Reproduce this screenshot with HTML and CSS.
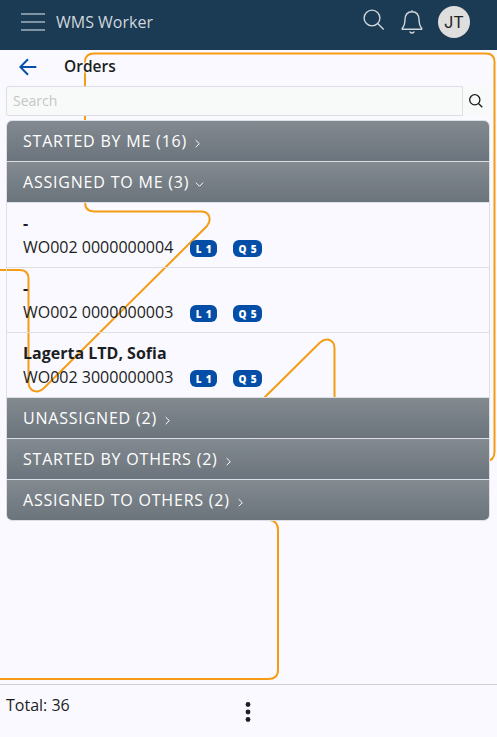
FILE: index.html
```html
<!DOCTYPE html>
<html lang="en">
<head>
<meta charset="utf-8">
<title>WMS Worker</title>
<link rel="stylesheet" href="styles.css">
</head>
<body>
<header class="navbar">
  <svg class="menu" width="24" height="20" viewBox="0 0 24 20"><path d="M0 2h24M0 10h24M0 18h24"/></svg>
  <span class="brand">WMS Worker</span>
  <svg class="nav-search" width="22" height="22" viewBox="0 0 22 22"><circle cx="9" cy="9" r="7.9"/><path d="M14.7 14.6l6 6"/></svg>
  <svg class="bell" width="22" height="25" viewBox="0 0 22 25"><path d="M11 .3v1.500M1.200 18.200c2.200-2.200 2.600-4.300 2.700-8C4 4.900 6.800 1.800 11 1.800s7 3.100 7.100 8.400c.1 3.700.5 5.800 2.700 8 .2.400 0 1.100-.5 1.100H1.700c-.5 0-.7-.7-.5-1.100zM8.800 21.500c.3 1 1.100 1.500 2.200 1.500s1.900-.5 2.200-1.500"/></svg>
  <span class="avatar">JT</span>
</header>
<main class="page">
  <svg class="pattern" width="497" height="634" viewBox="0 50 497 634">
    <path d="M-5 270H20Q28.500 270 28.500 279V383Q29 391 37 391.500Q40 391.500 44 388L207 226Q211 221 209 216Q207 211.500 201 211.500H94Q85 211.500 85 202V62Q85 53.500 94 53.500H486Q494.500 53.500 494.500 62V452Q494.500 461 485 461"/>
    <path d="M264 398L320 342.500Q324 339 328 339.500Q334.500 341 334.500 348V400M270 520Q278 521 278 530V670Q278 679 268 679H-5"/>
  </svg>
  <div class="heading">
    <svg width="18" height="18" viewBox="0 0 18 18"><path d="M17.300 9H1.500M9 1.300L1.300 9L9 16.700"/></svg>
    <h1>Orders</h1>
  </div>
  <div class="search">
    <input type="text" placeholder="Search">
    <button><svg width="14" height="14" viewBox="0 0 14 14"><circle cx="5.800" cy="5.800" r="5.100"/><path d="M9.500 9.500L13.300 13.200"/></svg></button>
  </div>
  <section class="groups">
    <div class="group">STARTED BY ME (16)<svg class="chev" viewBox="0 0 10 10"><path d="M3 1.300l4 3.900-4 3.900"/></svg></div>
    <div class="group">ASSIGNED TO ME (3)<svg class="chev" viewBox="0 0 10 10"><path d="M1 3l4 4 4-4"/></svg></div>
    <div class="order"><strong>-</strong><div class="line"><span class="num">WO002 0000000004</span><span class="badge">L 1</span><span class="badge wide">Q 5</span></div></div>
    <div class="order"><strong>-</strong><div class="line"><span class="num">WO002 0000000003</span><span class="badge">L 1</span><span class="badge wide">Q 5</span></div></div>
    <div class="order"><strong>Lagerta LTD, Sofia</strong><div class="line"><span class="num">WO002 3000000003</span><span class="badge">L 1</span><span class="badge wide">Q 5</span></div></div>
    <div class="group">UNASSIGNED (2)<svg class="chev" viewBox="0 0 10 10"><path d="M3 1.300l4 3.900-4 3.900"/></svg></div>
    <div class="group">STARTED BY OTHERS (2)<svg class="chev" viewBox="0 0 10 10"><path d="M3 1.300l4 3.900-4 3.900"/></svg></div>
    <div class="group">ASSIGNED TO OTHERS (2)<svg class="chev" viewBox="0 0 10 10"><path d="M3 1.300l4 3.900-4 3.900"/></svg></div>
  </section>
</main>
<footer class="footer">
  <span class="total">Total: 36</span>
  <svg class="dots" width="6" height="20" viewBox="0 0 6 20"><circle cx="3" cy="2.500" r="2.400"/><circle cx="3" cy="10" r="2.400"/><circle cx="3" cy="17.500" r="2.400"/></svg>
  <span></span>
</footer>
</body>
</html>
```
FILE: styles.css
```css
* { box-sizing: border-box; }
body {
  margin: 0;
  height: 737px;
  display: flex;
  flex-direction: column;
  overflow: hidden;
  background: #faf9ff;
  color: #1b1e22;
  font: 16px/24px "Open Sans", "Noto Sans", sans-serif;
}
svg { display: block; flex: none; fill: none; stroke: currentColor; }
.navbar {
  height: 50px;
  flex: none;
  display: flex;
  align-items: flex-start;
  background: #1b3a53;
  color: #d0d6dc;
  padding-right: 27px;
}
.menu { margin: 12px 11px 0 21px; color: #a4b0ba; stroke-width: 1.6; }
.brand { margin-top: 10px; }
.nav-search { margin: 9px 16px 0 auto; stroke-width: 1.4; }
.bell { margin: 10px 15px 0 0; stroke-width: 1.4; }
.avatar {
  width: 32px;
  height: 32px;
  margin-top: 6px;
  border-radius: 50%;
  background: #dedede;
  color: #222;
  font: 16.500px/32px Inter, "Liberation Sans", sans-serif;
  text-align: center;
}
.page { flex: 1; position: relative; z-index: 0; padding: 0 7px 0 6px; }
.pattern { position: absolute; left: 0; top: 0; z-index: -1; stroke: #f59c14; stroke-width: 2; }
.heading { height: 36px; display: flex; align-items: flex-start; padding: 8px 0 0 13px; }
.heading svg { color: #064fa8; stroke-width: 2; }
h1 {
  margin: -4px 0 0 27px;
  font-size: 15.500px;
  line-height: 24px;
  font-weight: 600;
  text-shadow: 0 0 3px #faf9ff, 0 0 3px #faf9ff, 0 0 2px #faf9ff, 0 0 2px #faf9ff;
}
.search { display: flex; height: 30px; }
.search input {
  width: 457px;
  height: 30px;
  padding: 0 6px 1px;
  border: 1px solid #dcdfe5;
  border-radius: 3px 0 0 3px;
  background: #f8faf9;
  font: 14px "Open Sans", sans-serif;
}
.search input::placeholder { color: #c3c7c6; opacity: 1; }
.search button {
  flex: 1;
  display: flex;
  align-items: center;
  justify-content: center;
  padding: 0 2px 0 0;
  border: 0;
  background: #f8faf9;
  color: #171a1c;
}
.search svg { stroke-width: 1.3; }
.groups { margin-top: 4px; border: 1px solid #dcdfe5; border-radius: 6px; overflow: hidden; }
.group {
  height: 41px;
  display: flex;
  align-items: center;
  padding-left: 16px;
  border-bottom: 1px solid #dcdfe5;
  background: linear-gradient(#838a90, #6b737c);
  color: #fff;
  font-weight: 500;
  letter-spacing: .8px;
}
.group:last-child { height: 40px; border-bottom: 0; }
.chev { width: 9px; height: 9px; margin: 4px 0 0 6px; stroke-width: 1.1; }
.order { height: 65px; padding: 8px 16px 0; border-bottom: 1px solid #dcdfe5; }
.order strong { display: block; }
.line { display: flex; align-items: center; }
.num { width: 151px; }
.badge {
  width: 27px;
  height: 17px;
  margin: 3px 0 0 16px;
  border-radius: 6px;
  background: #044ea7;
  color: #fff;
  font-size: 10px;
  line-height: 18px;
  font-weight: 800;
  letter-spacing: .8px;
  padding-left: 1px;
  text-align: center;
}
.wide { width: 29px; }
.footer {
  height: 53px;
  display: grid;
  grid-template-columns: 1fr 6px 1fr;
  border-top: 1px solid #ccd0d5;
  padding: 8px 7px 0 6px;
}
.dots { margin-top: 9px; fill: #1b1e22; stroke: none; }
```
